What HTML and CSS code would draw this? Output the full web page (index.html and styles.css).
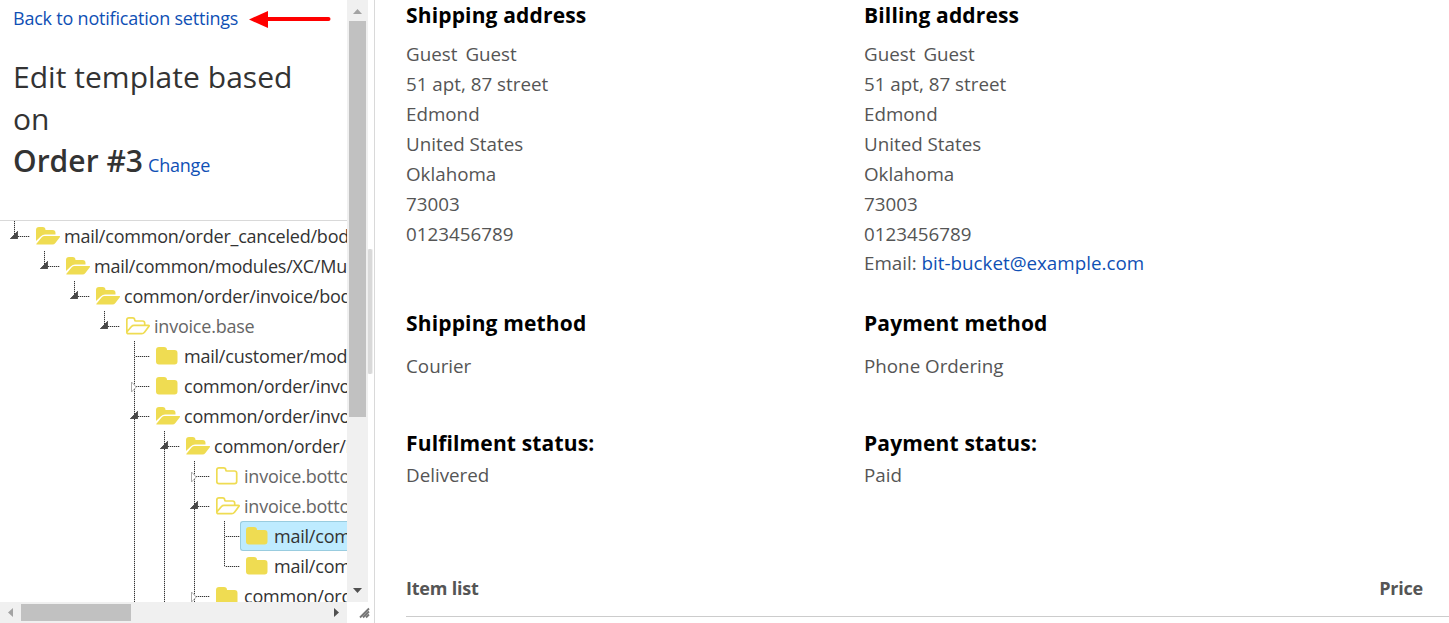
FILE: index.html
```html
<!DOCTYPE html>
<html lang="en">
<head>
<meta charset="utf-8">
<title>Edit template</title>
<link rel="stylesheet" href="styles.css">
</head>
<body>
<svg class="defs" width="0" height="0" aria-hidden="true">
  <symbol id="closed" viewBox="0 0 24 20"><path fill="#efdc52" d="M0 4Q0 1 3 1H8Q11 1 11 4H18.500Q21.500 4 21.500 7V15.500Q21.500 18.500 18.500 18.500H3Q0 18.500 0 15.500Z"/></symbol>
  <symbol id="closed-o" viewBox="0 0 24 20"><path fill="none" stroke="#efdc52" stroke-width="1.700" d="M.8 4Q.8 1.800 3 1.800H7.500Q9.800 1.800 9.800 4Q9.800 5 11 5H18.500Q20.700 5 20.700 7.200V15.500Q20.700 17.700 18.500 17.700H3Q.8 17.700 .8 15.500Z"/></symbol>
  <symbol id="open" viewBox="0 0 24 20"><path fill="#efdc52" d="M0 15V4Q0 1 3 1H6.500Q9.500 1 9.500 4H16.500Q19.500 4 19.500 7V8.500H9Q6.500 8.500 5 10.300ZM.4 17.800L6 11Q7 10 8.500 10H23.500Q24.500 10.300 23.800 11.300L19.400 17Q18.200 18.500 16.500 18.500H1Q0 18.500 .4 17.800Z"/></symbol>
  <symbol id="open-o" viewBox="0 0 24 20"><path fill="none" stroke="#efdc52" stroke-width="1.700" stroke-linejoin="round" d="M.8 16V4Q.8 1.800 3 1.800H6.500Q8.700 1.800 8.700 4Q8.700 5 10 5H16.500Q18.700 5 18.700 7.200V9.300M.8 16L5.500 10.500Q6.500 9.300 8 9.300H22.300Q23.700 9.400 22.800 10.600L18.500 16.200Q17.300 17.700 15.800 17.700H2.500Q.8 17.700 .8 16Z"/></symbol>
  <symbol id="expanded" viewBox="0 0 8 8"><path fill="#484848" stroke="#333" stroke-width=".7" d="M.3 7.700H7.700V.3Z"/></symbol>
  <symbol id="collapsed" viewBox="0 0 6 12"><path fill="#fff" stroke="#aaa" stroke-width="1" d="M.5 1V11L5.300 6Z"/></symbol>
</svg>
<div class="page">
  <aside class="sidebar">
    <div class="view">
      <div class="intro">
        <div class="back"><a href="#">Back to notification settings</a>
          <svg class="arrow" width="82" height="18" viewBox="0 0 82 18"><path d="M18 9H79.500" stroke="#f00" stroke-width="4" stroke-linecap="round"/><path d="M0 9.500L19 1V18Z" fill="#f00"/></svg>
        </div>
        <h1>Edit template based on<br><b>Order #3</b><a class="change" href="#">Change</a></h1>
      </div>
      <div class="tree">
        <div class="row"><i class="cell half dash"><svg class="tog"><use href="#expanded"/></svg></i><span class="label"><svg class="ico"><use href="#open"/></svg>mail/common/order_canceled/bod</span></div>
        <div class="row"><i class="cell"></i><i class="cell half dash"><svg class="tog"><use href="#expanded"/></svg></i><span class="label"><svg class="ico"><use href="#open"/></svg>mail/common/modules/XC/Mu</span></div>
        <div class="row"><i class="cell"></i><i class="cell"></i><i class="cell half dash"><svg class="tog"><use href="#expanded"/></svg></i><span class="label"><svg class="ico"><use href="#open"/></svg>common/order/invoice/bod</span></div>
        <div class="row"><i class="cell"></i><i class="cell"></i><i class="cell"></i><i class="cell half dash"><svg class="tog"><use href="#expanded"/></svg></i><span class="label list"><svg class="ico"><use href="#open-o"/></svg>invoice.base</span></div>
        <div class="row"><i class="cell"></i><i class="cell"></i><i class="cell"></i><i class="cell"></i><i class="cell full dash"></i><span class="label"><svg class="ico"><use href="#closed"/></svg>mail/customer/mod</span></div>
        <div class="row"><i class="cell"></i><i class="cell"></i><i class="cell"></i><i class="cell"></i><i class="cell full dash"><svg class="tog shut"><use href="#collapsed"/></svg></i><span class="label"><svg class="ico"><use href="#closed"/></svg>common/order/invo</span></div>
        <div class="row"><i class="cell"></i><i class="cell"></i><i class="cell"></i><i class="cell"></i><i class="cell full dash"><svg class="tog"><use href="#expanded"/></svg></i><span class="label"><svg class="ico"><use href="#open"/></svg>common/order/invo</span></div>
        <div class="row"><i class="cell"></i><i class="cell"></i><i class="cell"></i><i class="cell"></i><i class="cell full"></i><i class="cell full dash"><svg class="tog"><use href="#expanded"/></svg></i><span class="label"><svg class="ico"><use href="#open"/></svg>common/order/i</span></div>
        <div class="row"><i class="cell"></i><i class="cell"></i><i class="cell"></i><i class="cell"></i><i class="cell full"></i><i class="cell full"></i><i class="cell full dash"><svg class="tog shut"><use href="#collapsed"/></svg></i><span class="label list"><svg class="ico"><use href="#closed-o"/></svg>invoice.botto</span></div>
        <div class="row"><i class="cell"></i><i class="cell"></i><i class="cell"></i><i class="cell"></i><i class="cell full"></i><i class="cell full"></i><i class="cell full dash"><svg class="tog"><use href="#expanded"/></svg></i><span class="label list"><svg class="ico"><use href="#open-o"/></svg>invoice.botto</span></div>
        <div class="row"><i class="cell"></i><i class="cell"></i><i class="cell"></i><i class="cell"></i><i class="cell full"></i><i class="cell full"></i><i class="cell full"></i><i class="cell full dash"></i><span class="label selected"><svg class="ico"><use href="#closed"/></svg>mail/com</span></div>
        <div class="row"><i class="cell"></i><i class="cell"></i><i class="cell"></i><i class="cell"></i><i class="cell full"></i><i class="cell full"></i><i class="cell full"></i><i class="cell half dash"></i><span class="label"><svg class="ico"><use href="#closed"/></svg>mail/com</span></div>
        <div class="row"><i class="cell"></i><i class="cell"></i><i class="cell"></i><i class="cell"></i><i class="cell full"></i><i class="cell full"></i><i class="cell full dash"><svg class="tog shut"><use href="#collapsed"/></svg></i><span class="label"><svg class="ico"><use href="#closed"/></svg>common/ord</span></div>
      </div>
    </div>
    <div class="vbar">
      <svg width="21" height="21"><path d="M6 14H15L10.500 9Z" fill="#a3a3a3"/></svg>
      <div class="vthumb"></div>
      <svg class="end" width="21" height="21"><path d="M6 7H15L10.500 12Z" fill="#505050"/></svg>
    </div>
    <div class="gutter"><div class="handle"></div></div>
    <div class="hbar">
      <svg width="21" height="21"><path d="M13 6V15L8 10.500Z" fill="#a3a3a3"/></svg>
      <div class="hthumb"></div>
      <svg class="end" width="21" height="21"><path d="M8 6V15L13 10.500Z" fill="#505050"/></svg>
    </div>
    <div class="corner"><svg width="12" height="12"><path d="M1 10.500L10 1.500M4 10.500L10 4.500M7 10.500L10 7.500" stroke="#777" stroke-width="1.800"/></svg></div>
  </aside>
  <main class="invoice">
    <div class="cols address">
      <section><h2>Shipping address</h2><ul><li>Guest<span class="last">Guest</span></li><li>51 apt, 87 street</li><li>Edmond</li><li>United States</li><li>Oklahoma</li><li>73003</li><li>0123456789</li></ul></section>
      <section><h2>Billing address</h2><ul><li>Guest<span class="last">Guest</span></li><li>51 apt, 87 street</li><li>Edmond</li><li>United States</li><li>Oklahoma</li><li>73003</li><li>0123456789</li><li class="email">Email: <a href="#">bit-bucket@example.com</a></li></ul></section>
    </div>
    <div class="cols method">
      <section><h2>Shipping method</h2><p>Courier</p></section>
      <section><h2>Payment method</h2><p>Phone Ordering</p></section>
    </div>
    <div class="cols status">
      <section><h2>Fulfilment status:</h2><p>Delivered</p></section>
      <section><h2>Payment status:</h2><p>Paid</p></section>
    </div>
    <div class="items"><span>Item list</span><span>Price</span></div>
  </main>
</div>
</body>
</html>
```
FILE: styles.css
```css
* { box-sizing: border-box; }
body { margin: 0; background: #fff; font-family: "Open Sans", sans-serif; overflow: hidden; }
a { color: #0f50b5; text-decoration: none; }
svg { display: block; flex: none; }
.defs { position: absolute; }
.page { display: flex; width: 1449px; height: 623px; overflow: hidden; }

.sidebar {
  display: grid;
  grid-template-columns: 347px 21px 6px;
  grid-template-rows: 602px 21px;
  width: 375px;
  flex: none;
  border-right: 1px solid #d9d9d9;
}
.view { overflow: hidden; }
.intro { height: 221px; border-bottom: 1px solid #d9d9d9; padding: 4px 13px 0; }
.back { display: flex; align-items: center; gap: 11px; height: 28px; font-size: 18px; letter-spacing: -.21px; white-space: nowrap; }
.arrow { margin-top: 1px; }
h1 { margin: 24px 0 0; font-size: 30px; line-height: 42px; font-weight: 400; color: #333; letter-spacing: .03px; }
h1 b { font-weight: 600; }
.change { margin-left: 5px; font-size: 18px; letter-spacing: -.21px; }

.row { display: flex; height: 30px; width: 347px; }
.cell { display: block; position: relative; width: 30px; height: 30px; flex: none; }
.full::before, .half::before {
  content: ""; position: absolute; left: 14px; top: 0; width: 1px; height: 30px;
  background: repeating-linear-gradient(#333 0 1px, #ccc 1px 2px);
}
.half::before { height: 16px; }
.dash::after {
  content: ""; position: absolute; left: 15px; top: 15px; width: 15px; height: 1px;
  background: repeating-linear-gradient(90deg, #ccc 0 1px, #333 1px 2px);
}
.tog { position: absolute; z-index: 1; left: 10px; top: 10px; width: 8px; height: 8px; }
.tog.shut { left: 11px; width: 6px; height: 12px; }
.label {
  display: flex; flex: 1; align-items: center; gap: 4px; height: 30px; padding-left: 5px;
  border: 1px solid transparent; border-right: 0; font-size: 18px; letter-spacing: -.22px; color: #333; white-space: nowrap;
}
.ico { width: 24px; height: 20px; }
.label.list { color: #666; }
.label.selected { background: #beebff; border-color: #99ccdf; border-radius: 3px 0 0 3px; }

.vbar, .hbar { background: #f0f0f0; display: flex; }
.vbar { flex-direction: column; }
.vthumb { width: 17px; height: 396px; margin-left: 2px; background: #c1c1c1; }
.vbar .end { margin-top: auto; }
.hthumb { width: 110px; height: 17px; margin-top: 2px; background: #c1c1c1; }
.hbar .end { margin-left: auto; }
.gutter { padding-top: 249px; margin-left: -1px; }
.handle { width: 6px; height: 125px; background: #d9d9d9; border: solid #eee; border-width: 0 1px; border-radius: 2px; }
.corner { grid-column: 2 / 4; padding: 5px 0 0 12px; }

.invoice { flex: 1; padding-left: 31px; font-size: 18.8px; color: #555; }
.cols { display: grid; grid-template-columns: 458px 1fr; }
.address { height: 308px; }
.method { height: 120px; }
.status { height: 140px; }
h2 { margin: 0; font-size: 21px; line-height: 30px; font-weight: 700; color: #000; letter-spacing: .15px; }
ul { margin: 9px 0 0; padding: 0; list-style: none; line-height: 30px; }
.last { margin-left: 8px; }
.email { margin-top: -1px; }
p { margin: 0; line-height: 30px; }
.method p { margin-top: 13px; }
.status p { margin-top: 2px; }
.items { display: flex; justify-content: space-between; height: 49px; padding: 5px 26px 0 0; border-bottom: 1px solid #ccc; font-size: 18px; font-weight: 700; letter-spacing: -.2px; line-height: 30px; }
```
